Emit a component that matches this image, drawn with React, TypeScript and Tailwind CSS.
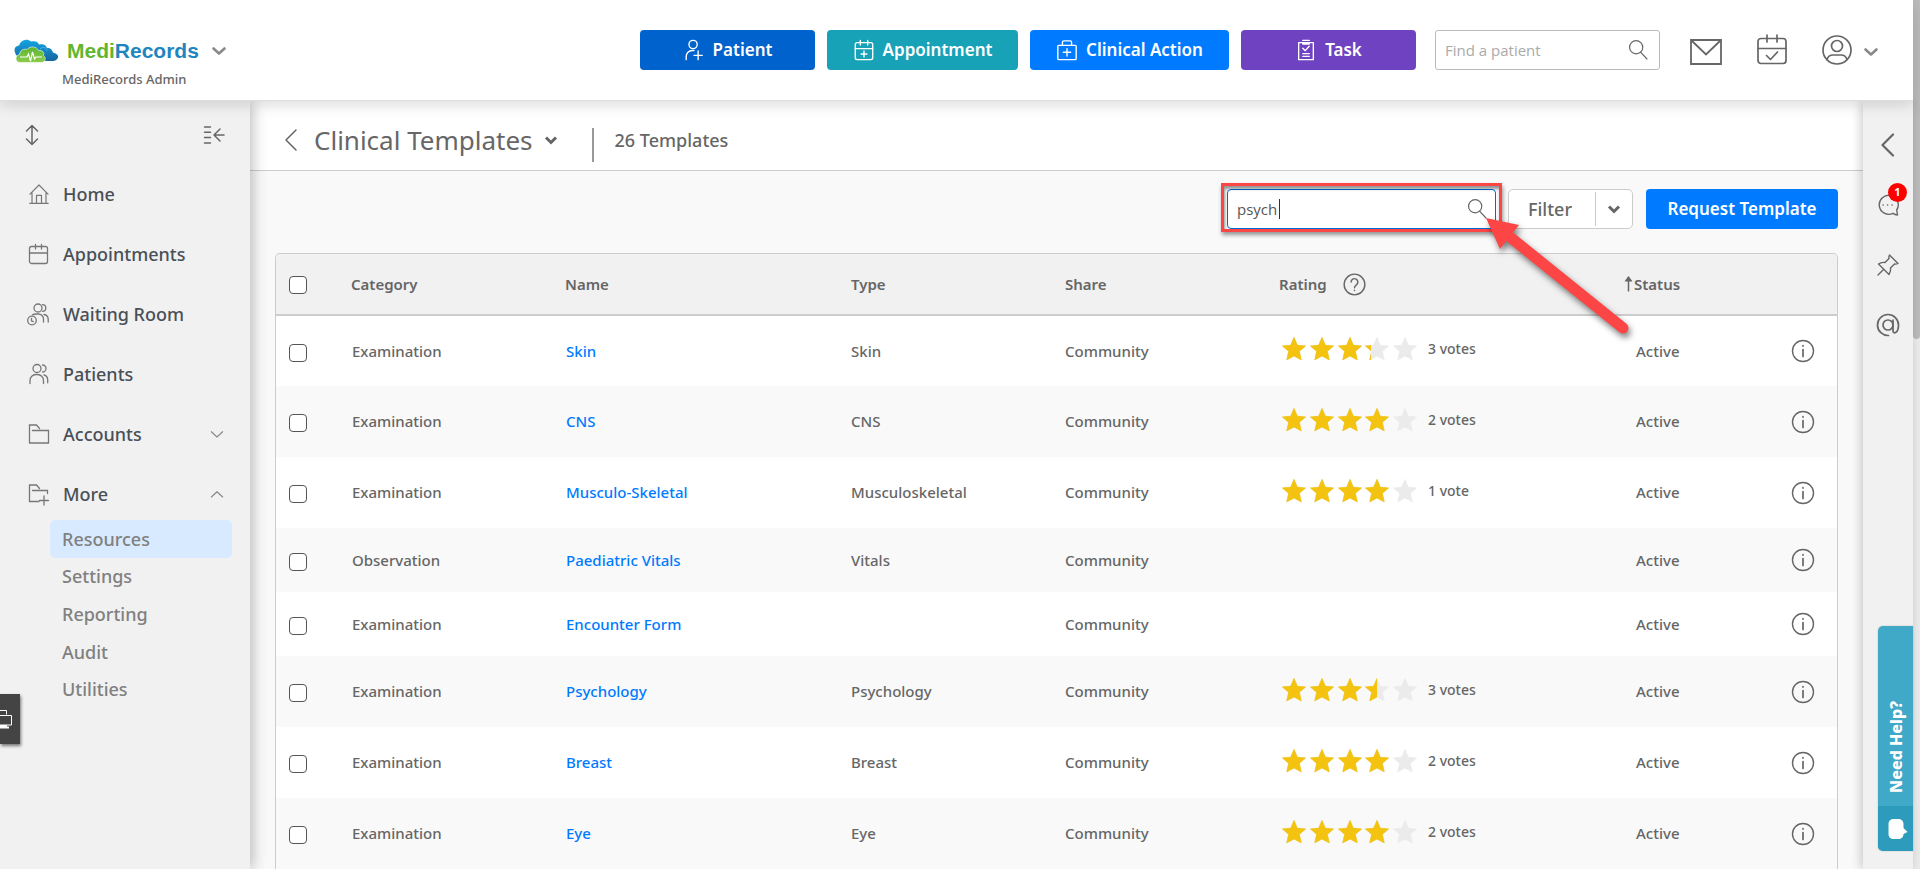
import React, { useState } from 'react';

type IconProps = {
  children: React.ReactNode;
  className?: string;
  box?: number;
  stroke?: number;
};

const Icon = ({ children, className = 'size-6', box = 24, stroke = 1.5 }: IconProps) => (
  <svg
    viewBox={`0 0 ${box} ${box}`}
    className={`shrink-0 ${className}`}
    fill="none"
    stroke="currentColor"
    strokeWidth={stroke}
    strokeLinecap="round"
    strokeLinejoin="round"
    aria-hidden="true"
  >
    {children}
  </svg>
);

const ChevronBold = ({ className = 'size-4' }: { className?: string }) => (
  <Icon box={16} stroke={3} className={className}>
    <path d="M3 5.5l5 5 5-5" strokeLinecap="butt" strokeLinejoin="miter" />
  </Icon>
);

const ChevronSoft = () => (
  <Icon box={16} stroke={2.6} className="size-4 text-[#888]">
    <path d="M2.5 5.5l5.5 5 5.5-5" />
  </Icon>
);

const SearchIcon = ({ className = 'size-6' }: { className?: string }) => (
  <Icon stroke={1.3} className={className}>
    <circle cx="10" cy="9" r="7.2" />
    <path d="M14.8 14.4l7 7.4" />
  </Icon>
);

const HomeIcon = () => (
  <Icon stroke={1.2}>
    <path d="M3 12.2L12 3l9 9.2M5 10.5V21M19 10.5V21M2.8 21.3h18.4M9.5 21v-7.7h5V21" />
  </Icon>
);

const CalendarIcon = () => (
  <Icon stroke={1.3}>
    <rect x="2.5" y="4.5" width="18" height="17" rx="2" />
    <path d="M2.5 11h18M8.5 2.5v4.5M14.5 2.5v4.5" />
  </Icon>
);

const PeopleIcon = () => (
  <Icon stroke={1.3}>
    <circle cx="10" cy="6.5" r="4" />
    <path d="M3 21.5v-3a6 6 0 0 1 6-6h1.5a6 6 0 0 1 6 6v3M15.5 3a3.5 3.5 0 1 1 0 7M17 13a5 5 0 0 1 3.7 4.8v3" />
  </Icon>
);

const WaitingIcon = () => (
  <Icon stroke={1.3}>
    <circle cx="11" cy="6" r="4" />
    <path d="M5.5 12.7c1-.6 2.5-.7 4-.7h2a5 5 0 0 1 5 5v3M15.5 2.7a3.3 3.3 0 1 1 0 6.6M17 12.5a5 5 0 0 1 4.2 4.8V20" />
    <circle cx="5" cy="18.5" r="4.3" />
    <path d="M4.5 16.3v2.5l1.7.8" />
  </Icon>
);

const FolderIcon = () => (
  <Icon stroke={1.3}>
    <path d="M2.5 21V3h7l3 3.5M2.5 21h19V8.5h-16" strokeLinejoin="miter" />
  </Icon>
);

const FolderPlusIcon = () => (
  <Icon stroke={1.3}>
    <path d="M12 19.5H2.5V3h7l3 3.5M5.5 8.5h15v3M17 14v9M12.5 18.5h9" strokeLinejoin="miter" />
  </Icon>
);

const InfoIcon = () => (
  <Icon stroke={1.4}>
    <circle cx="12" cy="12" r="10.5" />
    <path d="M12 10.5v7M12 6.7v.4" strokeWidth="1.7" />
  </Icon>
);

const navItems = [
  { label: 'Home', icon: <HomeIcon /> },
  { label: 'Appointments', icon: <CalendarIcon /> },
  { label: 'Waiting Room', icon: <WaitingIcon /> },
  { label: 'Patients', icon: <PeopleIcon /> },
  { label: 'Accounts', icon: <FolderIcon />, chevron: 'M4.5 9l7.5 7 7.5-7' },
  { label: 'More', icon: <FolderPlusIcon />, chevron: 'M4.5 16l7.5-7 7.5 7' },
];

const subItems = ['Resources', 'Settings', 'Reporting', 'Audit', 'Utilities'];

const templates = [
  { category: 'Examination', name: 'Skin', type: 'Skin', rating: 3.3, votes: '3 votes' },
  { category: 'Examination', name: 'CNS', type: 'CNS', rating: 4, votes: '2 votes' },
  { category: 'Examination', name: 'Musculo-Skeletal', type: 'Musculoskeletal', rating: 4, votes: '1 vote' },
  { category: 'Observation', name: 'Paediatric Vitals', type: 'Vitals' },
  { category: 'Examination', name: 'Encounter Form', type: '' },
  { category: 'Examination', name: 'Psychology', type: 'Psychology', rating: 3.5, votes: '3 votes' },
  { category: 'Examination', name: 'Breast', type: 'Breast', rating: 4, votes: '2 votes' },
  { category: 'Examination', name: 'Eye', type: 'Eye', rating: 4, votes: '2 votes' },
];

const StarRow = ({ className }: { className: string }) => (
  <span className={`flex w-[135px] justify-between ${className}`}>
    {[0, 1, 2, 3, 4].map((i) => (
      <svg key={i} viewBox="0 0 24 24" className="size-6 shrink-0" fill="currentColor" aria-hidden="true">
        <path
          d="M12 .5l3.300 7.800 8.200.7-6.200 5.300 1.900 8.500-7.200-3.900-7.200 3.900 1.900-8.500L.5 9l8.200-.7z"
          stroke="currentColor"
          strokeWidth=".8"
          strokeLinejoin="round"
        />
      </svg>
    ))}
  </span>
);

const Rating = ({ value, votes }: { value: number; votes: string }) => (
  <div className="flex items-center gap-[11px] pb-1">
    <span className="relative" role="img" aria-label={`${value} out of 5`}>
      <StarRow className="text-[#ebebeb]" />
      <span className="absolute inset-y-0 left-0 overflow-hidden" style={{ width: `${value * 20}%` }}>
        <StarRow className="text-[#f3c30f]" />
      </span>
    </span>
    <span className="text-sm">{votes}</span>
  </div>
);

const checkboxClass =
  'block size-[18px] appearance-none rounded-[4px] border border-[#555] bg-white checked:bg-[#007bff]';

const Logo = () => (
  <svg viewBox="0 0 44 24" className="h-6 w-11 shrink-0" aria-hidden="true">
    <defs>
      <linearGradient id="sky" x1="0" y1="0" x2="0" y2="1">
        <stop offset="0" stopColor="#12a5e3" />
        <stop offset="1" stopColor="#17649f" />
      </linearGradient>
      <linearGradient id="leaf" x1="0" y1="0" x2="0" y2="1">
        <stop offset="0" stopColor="#5cb531" />
        <stop offset="1" stopColor="#8ccc4b" />
      </linearGradient>
    </defs>
    <path d="M3 17C-1 12 0 7 5 6.500 7 1 13-1 17 2.500c4-1 7 0 8 3 4-1 7 0 8 3.500 4 0 5 2 6 4.500 4 1 5.500 3 5 5-1 3-4 3.500-7 3.500H8z" fill="url(#sky)" />
    <path d="M26 10c3-3 7-1 7 1.500" stroke="#4fb6e6" strokeWidth="1" fill="none" />
    <path d="M6 23.500c-5 0-5.500-7-.5-8C6 11 10 9.500 13 10.500c3-4 10-3 11.500 1 4-.5 6 2 5 5 3 2 2 7-2 7z" fill="url(#leaf)" stroke="#fff" strokeWidth=".6" />
    <path d="M6 18h7l1.500-3 2 7 2-9 2 7 1.500-2h6" stroke="#fff" strokeWidth="1.200" fill="none" />
  </svg>
);

const Header = () => (
  <header className="relative z-30 flex h-[101px] shrink-0 items-start border-b border-[#ddd] bg-white pl-3.5 shadow-[0_4px_14px_rgba(0,0,0,0.14)]">
    <div className="w-56 pt-[35px]">
      <button className="flex items-center">
        <Logo />
        <span className="ml-[9px] font-['Liberation_Sans',Arial,sans-serif] text-[21px] leading-8 font-bold text-[#1f85bf]">
          <span className="text-[#62b62f]">Medi</span>Records
        </span>
        <span className="ml-3">
          <ChevronSoft />
        </span>
      </button>
      <p className="pl-12 text-[13px] leading-6 font-medium">MediRecords Admin</p>
    </div>

    <div className="ml-auto flex items-center gap-3 pt-[30px] text-[17px] font-semibold text-white">
      <button className="flex h-10 w-[175px] items-center justify-center gap-2 rounded bg-[#0062cc]">
        <Icon className="size-[22px]">
          <circle cx="11" cy="6" r="4.500" />
          <path d="M3.500 22.500V19a6.500 6.500 0 0 1 6.500-6.500h2M16.500 13v9.500M12 17.800h9" />
        </Icon>
        Patient
      </button>
      <button className="flex h-10 w-[191px] items-center justify-center gap-2 rounded bg-[#17a2b8]">
        <Icon className="size-[22px]">
          <rect x="2.500" y="4" width="19" height="18.500" rx="2" />
          <path d="M2.500 10.500h19M8 1.500v5M16 1.500v5M12 13v6.500M8.800 16.300h6.400" />
        </Icon>
        Appointment
      </button>
      <button className="flex h-10 w-[199px] items-center justify-center gap-2 rounded bg-[#007bff]">
        <Icon className="size-[22px]">
          <rect x="2" y="7" width="20" height="15.500" rx="1" />
          <path d="M7 7V3.500A1.500 1.500 0 0 1 8.500 2h7A1.500 1.500 0 0 1 17 3.500V7M12 10.500v8M8 14.500h8" />
        </Icon>
        Clinical Action
      </button>
      <button className="flex h-10 w-[175px] items-center justify-center gap-2 rounded bg-[#6f42c1]">
        <Icon className="size-[22px]">
          <path d="M4 4h16v18.500H4zM8.500 1.500h7M8.500 4v1.500h7V4M8.500 10l2.700 2.700L15.500 8M8.500 16h7M8.500 19h7" />
        </Icon>
        Task
      </button>
    </div>

    <div className="mt-[30px] ml-[19px] flex h-10 w-[225px] items-center rounded-[3px] border border-[#bbb] pr-2.5 text-[#666]">
      <input
        type="search"
        aria-label="Find a patient"
        placeholder="Find a patient"
        className="h-full min-w-0 flex-1 bg-transparent pl-[9px] font-['Open_Sans','Noto_Sans',sans-serif] text-[15px] outline-none placeholder:text-[#aaa]"
      />
      <SearchIcon className="size-[22px]" />
    </div>

    <div className="mt-[34px] mr-[34px] ml-[30px] flex h-8 items-center text-[#666]">
      <button aria-label="Messages">
        <Icon box={32} stroke={1.8} className="size-8">
          <path d="M1 6h30v24H1zM1 6l15 14.500L31 6" strokeLinejoin="miter" />
        </Icon>
      </button>
      <button aria-label="Calendar" className="ml-[34px]">
        <Icon box={32} stroke={1.7} className="size-8">
          <rect x="2" y="4.500" width="28" height="25" rx="3" />
          <path d="M2 14.500h28M11 1v7M21 1v7M10.500 21.500l4 4 7-7.500" />
        </Icon>
      </button>
      <button aria-label="Account" className="ml-[33px] flex items-center gap-2.5">
        <Icon box={32} stroke={1.7} className="size-8">
          <circle cx="16" cy="16" r="14" />
          <circle cx="16" cy="12" r="5.500" />
          <path d="M6 25.500c1-3.500 3-4.500 6-4.500h8c3 0 5 1 6 4.500" />
        </Icon>
        <span className="mt-1">
          <ChevronSoft />
        </span>
      </button>
    </div>
  </header>
);

const Sidebar = () => (
  <aside className="relative z-20 w-[250px] shrink-0 bg-[#f1f1f1] shadow-[2px_0_14px_rgba(0,0,0,0.28)]">
    <div className="flex h-[63px] items-center justify-between pt-1 pr-[25px] pl-5 text-[#666]">
      <button aria-label="Expand all">
        <Icon>
          <path d="M12 3v18M6.500 8L12 2.500 17.500 8M6.500 16l5.500 5.500 5.500-5.500" />
        </Icon>
      </button>
      <button aria-label="Collapse menu">
        <Icon box={22} className="size-[22px]">
          <path d="M1.500 3h6M1.500 8.300h6M1.500 13.600h6M1.500 19h6M21 11H11.500M17 5l-6 6 6 6" />
        </Icon>
      </button>
    </div>
    <nav>
      {navItems.map((item) => (
        <a
          key={item.label}
          href="#"
          className="flex h-[60px] items-center gap-3 pr-6 pl-[27px] text-lg font-medium text-[#495057]"
        >
          <span className="text-[#777]">{item.icon}</span>
          <span className="flex-1">{item.label}</span>
          {item.chevron && (
            <Icon className="size-[18px] text-[#888]">
              <path d={item.chevron} />
            </Icon>
          )}
        </a>
      ))}
      <div className="-mt-1 mr-[18px] ml-[50px] grid h-[188px] auto-rows-fr">
        {subItems.map((label) => (
          <a
            key={label}
            href="#"
            className={`flex items-center rounded-[5px] pl-3 text-lg leading-6 font-medium text-[#808080] ${
              label === 'Resources' ? 'bg-[#d8eaff]' : ''
            }`}
          >
            {label}
          </a>
        ))}
      </div>
    </nav>

    {/* Remote session tab docked on the window edge */}
    <button
      aria-label="Open remote panel"
      className="absolute top-[593px] left-0 flex h-[50px] w-5 items-center bg-[#444] text-white shadow-[1px_2px_3px_rgba(0,0,0,0.5)]"
    >
      <svg viewBox="0 0 14 20" className="h-5 w-3.5" fill="none" stroke="currentColor" strokeWidth="1" aria-hidden="true">
        <path d="M0 1.500h6.500v4M0 6.500h11.500v9.500H0" />
        <path d="M0 17h7M0 18.500h9" strokeWidth="2" />
      </svg>
    </button>
  </aside>
);

const SearchBox = () => {
  const [query, setQuery] = useState('psych');

  return (
    <div className="relative">
      <div className="flex h-10 w-[269px] items-center rounded-[4px] border border-[#0069d9] bg-white pr-[7px]">
        <input
          type="text"
          aria-label="Search templates"
          value={query}
          onChange={(e) => setQuery(e.target.value)}
          className="h-full min-w-0 flex-1 pl-[9px] font-['Open_Sans','Noto_Sans',sans-serif] text-[15px] text-[#555] outline-none"
        />
        <SearchIcon className="size-[22px]" />
      </div>
      <span className="absolute top-2.5 left-[52px] h-5 w-px bg-[#333]" />
      {/* Callout frame and pointer */}
      <div className="pointer-events-none absolute -inset-x-1.5 -top-1.5 -bottom-[3px] border-[3px] border-[#fc4545] shadow-[1px_3px_4px_rgba(0,0,0,0.4),inset_1px_3px_3px_rgba(0,0,0,0.4)]" />
      <svg
        viewBox="0 0 160 140"
        className="pointer-events-none absolute top-5 left-full z-10 -ml-4 h-[140px] w-40 drop-shadow-[2px_4px_3px_rgba(0,0,0,0.5)]"
        aria-hidden="true"
      >
        <path d="M30 28L143 119" stroke="#fc4545" strokeWidth="11" strokeLinecap="round" />
        <path d="M6 9l33 7L20 40z" fill="#fc4545" />
      </svg>
    </div>
  );
};

const TemplateTable = () => (
  <div className="mx-[25px] mt-6 overflow-hidden rounded-t-[5px] border border-b-0 border-[#ccc] bg-white">
    <table className="w-full table-fixed border-collapse text-left text-[15px]">
      <colgroup>
        <col className="w-[63px]" />
        <col className="w-[214px]" />
        <col className="w-[286px]" />
        <col className="w-[214px]" />
        <col className="w-[214px]" />
        <col />
        <col className="w-[144px]" />
        <col className="w-[70px]" />
      </colgroup>
      <thead>
        <tr className="h-[61px] border-b-2 border-[#ccc] bg-[#f1f1f1]">
          <th className="pt-0.5 pl-[13px]">
            <input type="checkbox" aria-label="Select all templates" className={checkboxClass} />
          </th>
          <th className="px-3 font-semibold">Category</th>
          <th className="px-3 font-semibold">Name</th>
          <th className="px-3 font-semibold">Type</th>
          <th className="px-3 font-semibold">Share</th>
          <th className="px-3 font-semibold">
            <span className="flex items-center gap-4">
              Rating
              <Icon stroke={1.5} className="size-[23px]">
                <circle cx="12" cy="12" r="10.8" />
                <path d="M8.500 9.500a3.500 3.500 0 1 1 5.500 2.800c-1.300.9-2 1.500-2 3M12 18v.3" />
              </Icon>
            </span>
          </th>
          <th className="font-semibold" aria-sort="ascending">
            <button className="flex items-center">
              <svg viewBox="0 0 11 16" className="h-4 w-[11px]" aria-hidden="true">
                <path d="M5.500 1v14.500" stroke="currentColor" strokeWidth="1.500" />
                <path d="M5.500 0L9.500 5.500h-8z" fill="currentColor" />
              </svg>
              Status
            </button>
          </th>
          <th aria-label="Details" />
        </tr>
      </thead>
      <tbody>
        {templates.map((row) => (
          <tr key={row.name} className={`even:bg-[#f9f9f9] ${row.rating ? 'h-[71px]' : 'h-16'}`}>
            <td className="pt-[3px] pl-[13px]">
              <input type="checkbox" aria-label={`Select ${row.name}`} className={checkboxClass} />
            </td>
            <td className="px-[13px] font-medium">{row.category}</td>
            <td className="px-[13px] font-medium">
              <a href="#" className="text-[#007bff]">{row.name}</a>
            </td>
            <td className="px-3 font-medium">{row.type}</td>
            <td className="px-3 font-medium">Community</td>
            <td className="px-[15px] font-medium">
              {row.rating && row.votes && <Rating value={row.rating} votes={row.votes} />}
            </td>
            <td className="px-[13px] font-medium">Active</td>
            <td className="pl-0.5">
              <button aria-label={`Details for ${row.name}`} className="mx-auto block">
                <InfoIcon />
              </button>
            </td>
          </tr>
        ))}
      </tbody>
    </table>
  </div>
);

const Main = () => (
  <main className="min-w-0 flex-1 bg-[#f9f9f9]">
    <div className="flex h-[70px] items-center border-b border-[#ccc] bg-white pt-2 pl-8">
      <button aria-label="Back">
        <Icon className="size-6">
          <path d="M14 2L4 12l10 10" />
        </Icon>
      </button>
      <button className="ml-2 flex items-center gap-2.5">
        <h1 className="text-[26px] leading-9">Clinical Templates</h1>
        <ChevronBold />
      </button>
      <span className="mt-2.5 ml-[33px] h-[34px] w-0.5 bg-[#999]" />
      <p className="ml-[21px] text-lg font-medium">26 Templates</p>
    </div>

    <div className="mt-[18px] flex items-center justify-end pr-[25px]">
      <SearchBox />
      <div className="ml-3 flex h-10 w-[125px] items-center rounded-[5px] border border-[#ccc] bg-white">
        <button className="h-full flex-1 pr-1 text-lg font-medium">Filter</button>
        <button aria-label="Filter options" className="flex h-[34px] w-[37px] items-center justify-center border-l border-[#ccc]">
          <ChevronBold />
        </button>
      </div>
      <button className="ml-[13px] h-10 w-48 rounded bg-[#007bff] text-[17px] font-semibold text-white">
        Request Template
      </button>
    </div>

    <TemplateTable />
  </main>
);

const RightRail = () => (
  <aside className="relative z-10 flex w-[50px] shrink-0 flex-col items-center bg-[#f1f1f1] pt-8 text-[#666] shadow-[-2px_0_10px_rgba(0,0,0,0.2)]">
    <button aria-label="Open panel">
      <Icon stroke={2.2} className="size-6">
        <path d="M17 1.500L6.500 12 17 22.500" />
      </Icon>
    </button>
    <button aria-label="Chat, 1 new message" className="relative mt-9">
      <Icon stroke={1.4}>
        <path d="M21.500 22l-.8-5A9.500 9.500 0 1 0 17 20.300c1.500 1 3 1.500 4.500 1.700zM7 12h.2M11.500 12h.2M16 12h.2" />
      </Icon>
      <span className="absolute -top-2.5 left-3 flex size-[19px] items-center justify-center rounded-full bg-[#f00] text-[11px] font-bold text-white">
        1
      </span>
    </button>
    <button aria-label="Pinned" className="mt-9">
      <Icon stroke={1.4}>
        <path d="M13.500 2L22 10.500c-1.500.8-2.500.8-3.500.5l-4 4c.5 2.500 0 4.500-1.500 6.500L2.500 11c2-1.500 4-2 6.500-1.500l4-4c-.3-1-.3-2 .5-3.500zM7.500 16.500L2 22" />
      </Icon>
    </button>
    <button aria-label="Mentions" className="mt-9">
      <Icon stroke={1.7}>
        <circle cx="12" cy="12" r="5" />
        <path d="M17 7v11c0 3 5.500 3 5.500-6A10.500 10.500 0 1 0 12.500 22.500" />
      </Icon>
    </button>

    <button className="absolute top-[525px] right-0 flex h-[225px] w-[35px] flex-col overflow-hidden rounded-l-[5px] bg-[#41a9c8] text-white shadow-[0_0_2px_rgba(0,0,0,0.2)]">
      <span className="flex flex-1 items-center self-center pb-[13px] text-base leading-5 font-extrabold [writing-mode:sideways-lr]">
        Need Help?
      </span>
      <span className="flex h-[45px] w-full items-center justify-center bg-[#2d9cbc] pl-1">
        <svg viewBox="0 0 20 22" className="h-[22px] w-5" fill="currentColor" aria-hidden="true">
          <path d="M6 1h4c3.500 0 5.500 2 5.500 5v4l4 4-4 2c0 3-2 5-5.500 5H6c-3.500 0-5.500-2-5.500-5V6c0-3 2-5 5.500-5z" />
        </svg>
      </span>
    </button>
  </aside>
);

const App = () => (
  <div className="flex h-screen overflow-hidden font-['Noto_Sans','Open_Sans',sans-serif] text-[#666]">
    <div className="flex min-w-0 flex-1 flex-col">
      <Header />
      <div className="flex min-h-0 flex-1">
        <Sidebar />
        <Main />
        <RightRail />
      </div>
    </div>
    {/* Page scroll track */}
    <div className="w-[7px] shrink-0 bg-[#ebebeb]">
      <div className="h-[39%] rounded-b-full bg-[#bbb]" />
    </div>
  </div>
);

export default App;
